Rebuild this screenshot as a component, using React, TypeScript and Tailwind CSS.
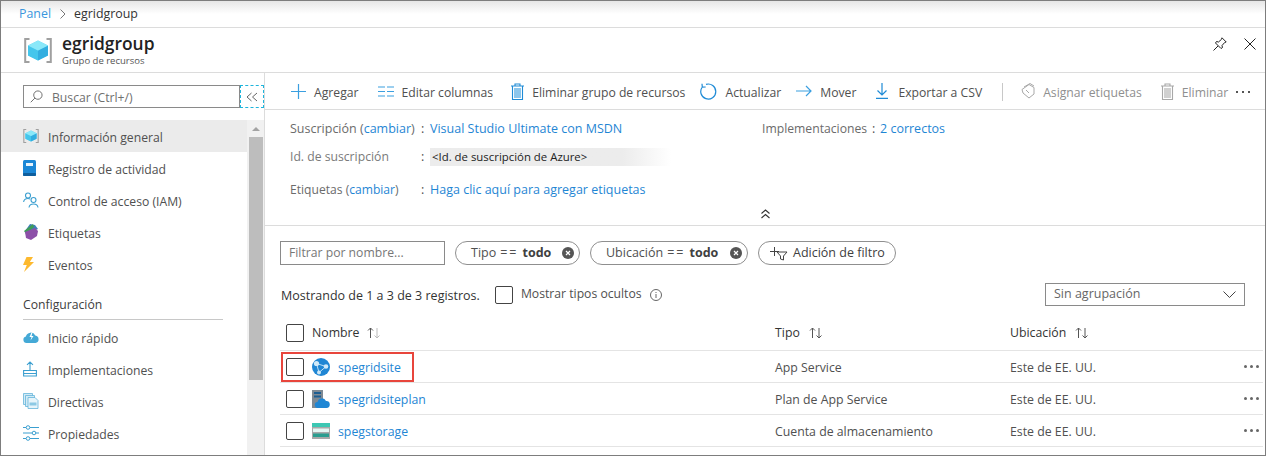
import type { ReactNode } from 'react'

function CubeGroup({ w, h }: { w: number; h: number }) {
  return (
    <svg width={w} height={h} viewBox="0 0 28 25" fill="none">
      <path d="M5.500 1H1.200v23h4.300M22.500 1h4.300v23h-4.300" stroke="#a0a0a0" strokeWidth="2" />
      <path d="M14 2.500l10 5v10l-10 5-10-5v-10z" fill="#5fd4f3" />
      <path d="M14 12.500l10-5v10l-10 5z" fill="#32aee0" />
      <path d="M14 12.500l-10-5v10l10 5z" fill="#44c6ec" />
      <path d="M14 2.500l10 5-10 5-10-5z" fill="#8ae8f9" />
    </svg>
  )
}

function BookIcon() {
  return (
    <svg width="14" height="16" viewBox="0 0 14 16">
      <rect x="0" y="0" width="13" height="16" rx="1.500" fill="#1b87d6" />
      <rect x="0" y="13" width="13" height="3" rx="1" fill="#0f5f9e" />
      <rect x="3" y="3" width="7" height="3" fill="#e8f4fc" />
    </svg>
  )
}

function PeopleIcon() {
  return (
    <svg width="16" height="16" viewBox="0 0 16 16" fill="none" stroke="#3b9fd0" strokeWidth="1.100">
      <circle cx="5" cy="3.500" r="2.500" />
      <path d="M.6 10c.3-2.400 2-3.500 4.400-3.500 1 0 1.500.2 2 .5" />
      <circle cx="10.500" cy="8" r="2.500" />
      <path d="M6 15.500c.3-2.500 2-3.500 4.500-3.500s4.200 1 4.500 3.500" />
    </svg>
  )
}

function TagsIcon() {
  return (
    <svg width="16" height="16" viewBox="0 0 16 16">
      <path d="M7 0l5 1 3 4-9 4-4-2z" fill="#3f7fb8" />
      <path d="M1 7l9-7 1 3-8 7z" fill="#3f9d58" />
      <path d="M2 8l10-4 3 3-1 5-6 4-5-2z" fill="#8c4fa8" />
    </svg>
  )
}

function BoltIcon() {
  return (
    <svg width="11" height="15" viewBox="0 0 11 15">
      <path d="M3.500 0H10L6.800 5H11L1 15l2.800-7H0z" fill="#fdb92e" />
    </svg>
  )
}

function CloudBoltIcon() {
  return (
    <svg width="16" height="12" viewBox="0 0 16 12">
      <path d="M3.500 12a3.300 3.300 0 01-.6-6.500A5 5 0 0112.300 4.500 3.800 3.800 0 0112.500 12z" fill="#44a9d6" />
      <path d="M8.500 1.500L6.500 6h2L7.500 9.500 10.500 5h-2l1-3.500z" fill="#fff" />
    </svg>
  )
}

function UploadIcon() {
  return (
    <svg width="14" height="16" viewBox="0 0 14 16" fill="none" stroke="#3b9fd0" strokeWidth="1.100">
      <path d="M7 9.500V1M4 3.800L7 1l3 2.800M.6 9.500h12.800v5.500H.6zM.6 12.500h12.800" />
    </svg>
  )
}

function DocsIcon() {
  return (
    <svg width="16" height="16" viewBox="0 0 16 16" fill="none">
      <path d="M.5.500h9v11h-9z" fill="#d3ebf6" stroke="#64b5da" strokeWidth=".8" />
      <path d="M2.500 2.500h9v11h-9z" fill="#d3ebf6" stroke="#64b5da" strokeWidth=".8" />
      <path d="M5 4.500h7l3 3v8H5z" fill="#e6f4fa" stroke="#64b5da" strokeWidth=".8" />
      <path d="M6.500 9.500h7v3h-7z" fill="#8cc9e4" />
    </svg>
  )
}

function SlidersIcon() {
  return (
    <svg width="16" height="16" viewBox="0 0 16 16" fill="none" stroke="#3b9fd0" strokeWidth="1">
      <path d="M0 2.500h3M7 2.500h9M0 8h9M13 8h3M0 13.500h3M7 13.500h9" />
      <circle cx="5" cy="2.500" r="1.800" />
      <circle cx="11" cy="8" r="1.800" />
      <circle cx="5" cy="13.500" r="1.800" />
    </svg>
  )
}

const GENERAL: [string, ReactNode][] = [
  ['Información general', <CubeGroup w={16} h={14} />],
  ['Registro de actividad', <BookIcon />],
  ['Control de acceso (IAM)', <PeopleIcon />],
  ['Etiquetas', <TagsIcon />],
  ['Eventos', <BoltIcon />],
]

const CONFIG: [string, ReactNode][] = [
  ['Inicio rápido', <CloudBoltIcon />],
  ['Implementaciones', <UploadIcon />],
  ['Directivas', <DocsIcon />],
  ['Propiedades', <SlidersIcon />],
]

function NavItem({ label, icon, active }: { label: string; icon: ReactNode; active?: boolean }) {
  return (
    <div className={`flex h-8 items-center ${active ? 'bg-[#ebebeb]' : ''}`}>
      <span className="ml-[22px] flex w-[25px] shrink-0 items-center">{icon}</span>
      <span className="pt-[4px] text-[12.200px] text-[#505050]">{label}</span>
    </div>
  )
}

function Sidebar() {
  return (
    <aside className="relative w-[264px] shrink-0 border-r border-[#dcdcdc]">
      <div className="flex h-[47px] items-start pt-3 pl-[22px]">
        <div className="flex h-[23px] w-[217px] items-center border border-[#8a8a8a] pl-[6px]">
          <svg width="13" height="13" viewBox="0 0 14 14" fill="none" stroke="#666" strokeWidth="1">
            <circle cx="8.500" cy="5.500" r="4.500" />
            <path d="M5.300 8.700L.8 13.200" />
          </svg>
          <span className="ml-[9px] pt-[4px] text-[12.200px] text-[#6f6f6f]">Buscar (Ctrl+/)</span>
        </div>
        <div className="flex h-[23px] w-6 items-center justify-center border border-dashed border-[#1fb5dc] text-[#666]">
          <svg width="12" height="10" viewBox="0 0 12 10" fill="none" stroke="#666" strokeWidth="1">
            <path d="M5.500 1L1 5l4.500 4M11 1L6.500 5l4.500 4" />
          </svg>
        </div>
      </div>
      <div className="flex">
        <nav className="w-[246px] shrink-0">
          {GENERAL.map(([label, icon], i) => (
            <NavItem key={label} label={label} icon={icon} active={i === 0} />
          ))}
          <div className="mt-[16px] ml-[22px] h-[24px] w-[200px] border-b border-[#c8c8c8] text-[12.200px] leading-[18px] text-[#404040]">
            Configuración
          </div>
          <div className="h-[1px]" />
          {CONFIG.map(([label, icon]) => (
            <NavItem key={label} label={label} icon={icon} />
          ))}
        </nav>
        <div className="flex h-[340px] w-[17px] flex-col items-center bg-[#f1f1f1]">
          <div className="flex h-[17px] w-full items-center justify-center">
            <div className="h-0 w-0 border-x-[4px] border-b-[4px] border-x-transparent border-b-[#a3a3a3]" />
          </div>
          <div className="h-[243px] w-[14px] bg-[#bdbdbd]" />
        </div>
      </div>
    </aside>
  )
}

function ToolItem({
  icon,
  label,
  w,
  ml,
  muted,
  wide,
}: {
  icon: ReactNode
  label: string
  w: number
  ml: string
  muted?: boolean
  wide?: boolean
}) {
  return (
    <div className={`flex items-center ${ml}`}>
      <span className="flex items-center justify-center" style={{ width: w }}>
        {icon}
      </span>
      <span className={`${wide ? 'ml-[10px]' : 'ml-2'} pt-[4px] whitespace-nowrap text-[12.200px] ${muted ? 'text-[#8f8f8f]' : 'text-[#505050]'}`}>
        {label}
      </span>
    </div>
  )
}

function TrashIcon({ color, fill }: { color: string; fill: string }) {
  return (
    <svg width="13" height="17" viewBox="0 0 13 17" fill="none" stroke={color} strokeWidth="1.100">
      <path d="M0 3h13M4 3V1h5v2M1.500 3v13.500h10V3" />
      <rect x="3" y="5" width="7" height="10" fill={fill} stroke="none" />
    </svg>
  )
}

function Toolbar() {
  return (
    <div className="flex h-[37px] shrink-0 items-center border-b border-[#dcdcdc] pt-[1px] pl-[26px]">
      <ToolItem
        ml=""
        w={15}
        label="Agregar"
        icon={
          <svg width="15" height="15" viewBox="0 0 15 15" stroke="#3b9fe0" strokeWidth="1.200">
            <path d="M7.500 0v15M0 7.500h15" />
          </svg>
        }
      />
      <ToolItem
        ml="ml-[19px]"
        w={16}
        label="Editar columnas"
        icon={
          <svg width="16" height="11" viewBox="0 0 16 11" stroke="#3b9fe0" strokeWidth="1.200">
            <path d="M0 1h7M9 1h7M0 5.500h7M9 5.500h7M0 10h7M9 10h7" />
          </svg>
        }
      />
      <ToolItem ml="ml-[18px]" w={13} label="Eliminar grupo de recursos" icon={<TrashIcon color="#1f8bd6" fill="#8cc6ec" />} />
      <ToolItem
        ml="ml-[15px]"
        w={17}
        label="Actualizar"
        icon={
          <svg width="17" height="17" viewBox="0 0 17 17" fill="none" stroke="#1f8bd6" strokeWidth="1.200">
            <path d="M6 1.400a7.500 7.500 0 11-3.700 2.600M2 .8l.3 3.400 3.400-.2" />
          </svg>
        }
      />
      <ToolItem
        ml="ml-[15px]"
        w={16}
        label="Mover"
        icon={
          <svg width="16" height="12" viewBox="0 0 16 12" fill="none" stroke="#3b9fe0" strokeWidth="1.200">
            <path d="M0 6h15M10 1l5 5-5 5" />
          </svg>
        }
      />
      <ToolItem
        ml="ml-[20px]"
        w={12}
        wide
        label="Exportar a CSV"
        icon={
          <svg width="12" height="16" viewBox="0 0 12 16" fill="none" stroke="#1f8bd6" strokeWidth="1.200">
            <path d="M6 0v12M1.500 7.500L6 12l4.500-4.500M0 15.400h12" />
          </svg>
        }
      />
      <div className="ml-[20px] h-[18px] w-px bg-[#c8c8c8]" />
      <ToolItem
        ml="ml-[18px]"
        w={14}
        muted
        label="Asignar etiquetas"
        icon={
          <svg width="14" height="16" viewBox="0 0 14 16" fill="none" stroke="#a8a8a8" strokeWidth="1">
            <path d="M1 6.500l7-5 5 3v6.500l-5 4-6-5zM3 4l6-3.500 4 2.500M5 7l3 3" />
          </svg>
        }
      />
      <ToolItem ml="ml-[19px]" w={13} muted label="Eliminar" icon={<TrashIcon color="#a8a8a8" fill="#d0d0d0" />} />
      <span className="ml-[8px] flex gap-[4px]">
        <i className="h-[2px] w-[2px] bg-[#555]" />
        <i className="h-[2px] w-[2px] bg-[#555]" />
        <i className="h-[2px] w-[2px] bg-[#555]" />
      </span>
    </div>
  )
}

function Essentials() {
  return (
    <section className="h-[116px] shrink-0 border-b border-[#dcdcdc] pl-[25px] text-[12.500px]">
      <div className="flex h-[38px] items-center pt-[1px]">
        <span className="w-[131px] text-[#6b6b6b]">
          Suscripción (<span className="text-[#1f86d4]">cambiar</span>)
        </span>
        <span className="w-[9px] text-[#505050]">:</span>
        <span className="w-[332px] text-[#1f86d4]">Visual Studio Ultimate con MSDN</span>
        <span className="w-[110px] text-[12.200px] text-[#6b6b6b]">Implementaciones</span>
        <span className="w-[8px] text-[#505050]">:</span>
        <span className="text-[#1f86d4]">2 correctos</span>
      </div>
      <div className="flex h-[18px] items-center">
        <span className="w-[131px] text-[12.200px] text-[#7a7a7a]">Id. de suscripción</span>
        <span className="w-[9px] text-[#505050]">:</span>
        <span className="flex h-[18px] w-[241px] items-center bg-gradient-to-r from-[#ececec] via-[#ececec] via-80% to-white pl-[2px] text-[11.400px] text-[#222]">
          {'<Id. de suscripción de Azure>'}
        </span>
      </div>
      <div className="mt-[15px] flex h-[18px] items-center">
        <span className="w-[131px] text-[12.100px] text-[#6b6b6b]">
          Etiquetas (<span className="text-[#1f86d4]">cambiar</span>)
        </span>
        <span className="w-[9px] text-[#505050]">:</span>
        <span className="text-[#1f86d4]">Haga clic aquí para agregar etiquetas</span>
      </div>
      <div className="mt-[10px] flex justify-center pr-[25px]">
        <svg width="9" height="10" viewBox="0 0 9 10" fill="none" stroke="#333" strokeWidth="1.100">
          <path d="M.5 4.500L4.500 1l4 3.500M.5 9l4-3.500 4 3.500" />
        </svg>
      </div>
    </section>
  )
}

function Pill({ field, w }: { field: string; w: string }) {
  return (
    <div className={`flex h-[24px] items-center justify-between rounded-full border border-[#8f8f8f] pl-[15px] pr-[5px] text-[12.500px] text-[#505050] ${w}`}>
      <span>
        {field}
        <span className="mx-[4px] tracking-[2px]">==</span>
        <b className="font-bold text-[#404040]">todo</b>
      </span>
      <svg width="12" height="12" viewBox="0 0 12 12">
        <circle cx="6" cy="6" r="6" fill="#555" />
        <path d="M4 4l4 4M8 4l-4 4" stroke="#fff" strokeWidth="1.200" />
      </svg>
    </div>
  )
}

function Check() {
  return <div className="h-[18px] w-[18px] shrink-0 rounded-[2px] border border-[#444]" />
}

function SortArrows({ dim }: { dim?: boolean }) {
  return (
    <svg width="16" height="12" viewBox="0 0 16 12" fill="none" strokeWidth="1">
      <path d="M4.500 11V1M2 3.500L4.500 1 7 3.500" stroke="#555" />
      <path d="M11 1v10M8.500 8.500L11 11l2.500-2.500" stroke={dim ? '#bbb' : '#555'} />
    </svg>
  )
}

function GlobeIcon() {
  return (
    <svg width="18" height="18" viewBox="0 0 18 18">
      <circle cx="9" cy="9" r="9" fill="#1f86d4" />
      <circle cx="4.500" cy="5.500" r="2.600" fill="#cfe9f8" />
      <circle cx="14" cy="8.500" r="2.300" fill="#cfe9f8" />
      <circle cx="7" cy="14.500" r="2" fill="#cfe9f8" />
      <path d="M4.500 5.500l9.500 3-7 6z" fill="none" stroke="#cfe9f8" strokeWidth=".9" />
    </svg>
  )
}

function PlanIcon() {
  return (
    <svg width="18" height="18" viewBox="0 0 18 18">
      <rect x="0" y="0" width="11" height="18" fill="#7f8a94" />
      <rect x="2" y="2" width="7" height="2" fill="#1d5e92" />
      <rect x="2" y="5.500" width="7" height="2" fill="#1d5e92" />
      <path d="M6 18a3 3 0 01-.5-6 4.500 4.500 0 018.500-1 3.500 3.500 0 01.5 7z" fill="#1f86d4" />
    </svg>
  )
}

function StorageIcon() {
  return (
    <svg width="18" height="16" viewBox="0 0 18 16">
      <rect width="18" height="16" fill="#a8a8a8" />
      <rect y="0" width="18" height="4" fill="#3cc7b3" />
      <rect x="1" y="5.500" width="16" height="3.500" fill="#e4f6f3" />
      <rect x="1" y="10.500" width="16" height="3.500" fill="#2a9d8f" />
    </svg>
  )
}

const ROWS: [string, ReactNode, string][] = [
  ['spegridsite', <GlobeIcon />, 'App Service'],
  ['spegridsiteplan', <PlanIcon />, 'Plan de App Service'],
  ['spegstorage', <StorageIcon />, 'Cuenta de almacenamiento'],
]

function ResourceTable() {
  return (
    <div className="relative mt-[9px] ml-[15px] mr-[2px] text-[12.300px]">
      <div className="grid h-[36px] grid-cols-[495px_235px_1fr] items-center border-b border-[#e4e4e4] text-[#333]">
        <div className="flex items-center pl-[6px]">
          <Check />
          <span className="ml-2 pt-[2px]">Nombre</span>
          <span className="ml-[6px]">
            <SortArrows dim />
          </span>
        </div>
        <div className="flex items-center gap-2">
          <span className="pt-[2px]">Tipo</span> <SortArrows />
        </div>
        <div className="flex items-center gap-2">
          <span className="pt-[2px]">Ubicación</span> <SortArrows />
        </div>
      </div>
      {ROWS.map(([name, icon, type]) => (
        <div key={name} className="grid h-[32px] grid-cols-[495px_235px_1fr] items-center border-b border-[#e4e4e4] text-[#505050]">
          <div className="flex items-center pl-[6px]">
            <Check />
            <span className="ml-2 flex w-[18px] justify-center">{icon}</span>
            <span className="ml-2 pt-[4px] text-[#1f86d4]">{name}</span>
          </div>
          <div className="pt-[4px]">{type}</div>
          <div className="flex items-center justify-between pr-[4px]">
            <span className="pt-[4px]">Este de EE. UU.</span>
            <span className="flex gap-[3px]">
              <i className="h-[3px] w-[3px] rounded-full bg-[#666]" />
              <i className="h-[3px] w-[3px] rounded-full bg-[#666]" />
              <i className="h-[3px] w-[3px] rounded-full bg-[#666]" />
            </span>
          </div>
        </div>
      ))}
      <div className="absolute top-[37px] left-[1px] h-[30px] w-[133px] border-2 border-[#e8453c]" />
    </div>
  )
}

export default function App() {
  return (
    <div className="flex h-[456px] w-[1266px] flex-col overflow-hidden border border-[#7d7d7d] bg-white font-['Open_Sans',sans-serif]">
      <div className="flex h-[27px] shrink-0 items-center border-b border-[#dcdcdc] bg-gradient-to-b from-[#e6e6e6] via-white to-white pl-[18px] text-[12.400px]">
        <span className="text-[#3a96dd]">Panel</span>
        <svg className="mr-[8px] ml-[9px]" width="6" height="10" viewBox="0 0 6 10" fill="none" stroke="#777" strokeWidth="1">
          <path d="M.5.500L5 5 .5 9.500" />
        </svg>
        <span className="text-[#333]">egridgroup</span>
      </div>
      <header className="flex h-[45px] shrink-0 items-center border-b border-[#dcdcdc] pl-[23px] pr-[9px]">
        <CubeGroup w={28} h={25} />
        <div className="ml-[10px]">
          <div className="text-[17.400px] leading-[20px] font-semibold text-[#222]">egridgroup</div>
          <div className="mt-[2px] text-[9.500px] leading-[12px] text-[#555]">Grupo de recursos</div>
        </div>
        <div className="mb-[12px] ml-auto flex items-center gap-[17px]">
          <svg width="14" height="14" viewBox="0 0 14 14" fill="none" stroke="#222" strokeWidth="1">
            <path d="M9 .8l4.200 4.200-1.500.5L9 8.500l.5 2L8 11.500 2.500 6 3.500 4.500l2 .5 3-2.700zM5 9l-4.500 4.500" />
          </svg>
          <svg width="12" height="12" viewBox="0 0 12 12" stroke="#222" strokeWidth="1">
            <path d="M.5.500l11 11M11.500.500l-11 11" />
          </svg>
        </div>
      </header>
      <div className="flex min-h-0 flex-1">
        <Sidebar />
        <main className="flex min-w-0 flex-1 flex-col">
          <Toolbar />
          <Essentials />
          <div className="mt-[15px] ml-[15px] flex items-center">
            <div className="flex h-[24px] w-[165px] items-center border border-[#8a8a8a] pl-2 text-[12.200px] text-[#777]">Filtrar por nombre...</div>
            <Pill field="Tipo" w="ml-[10px] w-[125px]" />
            <Pill field="Ubicación" w="ml-[10px] w-[158px]" />
            <div className="ml-[10px] flex h-[24px] w-[138px] items-center rounded-full border border-[#8f8f8f] pl-[11px] text-[12.500px] text-[#404040]">
              <svg width="20" height="16" viewBox="0 0 20 16" fill="none" stroke="#444" strokeWidth="1">
                <path d="M4.500 2v9M0 6.500h9M7 7h10l-3.500 4v4l-3-1v-3z" />
              </svg>
              <span className="ml-[3px]">Adición de filtro</span>
            </div>
          </div>
          <div className="mt-[18px] ml-[16px] mr-[20px] flex h-[23px] items-center text-[12.500px] text-[#333]">
            <span className="mt-[3px]">Mostrando de 1 a 3 de 3 registros.</span>
            <div className="ml-[15px]">
              <Check />
            </div>
            <span className="ml-2 text-[12.200px] text-[#505050]">Mostrar tipos ocultos</span>
            <svg className="ml-[8px]" width="12" height="12" viewBox="0 0 12 12" fill="none" stroke="#555" strokeWidth=".9">
              <circle cx="6" cy="6" r="5.500" />
              <path d="M6 5v4M6 3v1" />
            </svg>
            <div className="ml-auto flex h-[23px] w-[200px] items-center justify-between border border-[#8a8a8a] pl-[8px] pr-[8px] text-[#666]">
              Sin agrupación
              <svg width="13" height="7" viewBox="0 0 13 7" fill="none" stroke="#444" strokeWidth="1">
                <path d="M.5.500l6 6 6-6" />
              </svg>
            </div>
          </div>
          <ResourceTable />
        </main>
      </div>
    </div>
  )
}
